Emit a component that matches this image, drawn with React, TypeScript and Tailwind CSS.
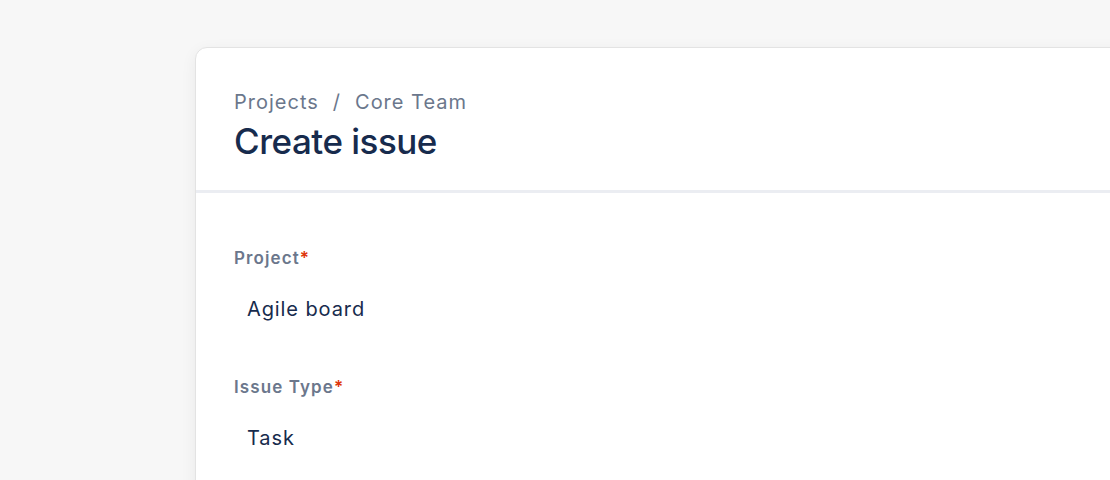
export default function App() {
  const fields = [
    { label: 'Project', value: 'Agile board' },
    { label: 'Issue Type', value: 'Task' },
  ]

  return (
    <div
      className="h-[480px] w-[1110px] overflow-hidden bg-[#f7f7f7]"
      style={{ fontFamily: 'Inter, "Noto Sans", sans-serif' }}
    >
      <div className="ml-[195px] mt-[47px] w-[1000px] h-[600px] rounded-[12px] border border-[#e3e3e3] bg-white shadow-[0_4px_16px_rgba(0,0,0,0.06)]">
        {/* Header */}
        <div className="px-[38px] pt-[40px] pb-[27px] border-b-[3px] border-[#ebedf2]">
          <div className="flex items-center gap-[14px] text-[20px] leading-[28px] tracking-[1px] text-[#6b778c]">
            <span>Projects</span>
            <span>/</span>
            <span>Core Team</span>
          </div>
          <h1 className="mt-[3px] text-[35px] leading-[44px] font-medium tracking-[-0.5px] text-[#172b4d]">
            Create issue
          </h1>
        </div>

        {/* Form */}
        <div className="px-[38px] pt-[53px] flex flex-col gap-[46px]">
          {fields.map((field) => (
            <div key={field.label} className="flex flex-col gap-[19px]">
              <label className="text-[17px] leading-[24px] font-semibold tracking-[1.1px] text-[#6b778c]">
                {field.label}
                <span className="text-[#de350b]">*</span>
              </label>
              <div className="h-[40px] flex items-center px-[13px] text-[20px] tracking-[0.9px] text-[#172b4d]">
                {field.value}
              </div>
            </div>
          ))}
        </div>
      </div>
    </div>
  )
}
